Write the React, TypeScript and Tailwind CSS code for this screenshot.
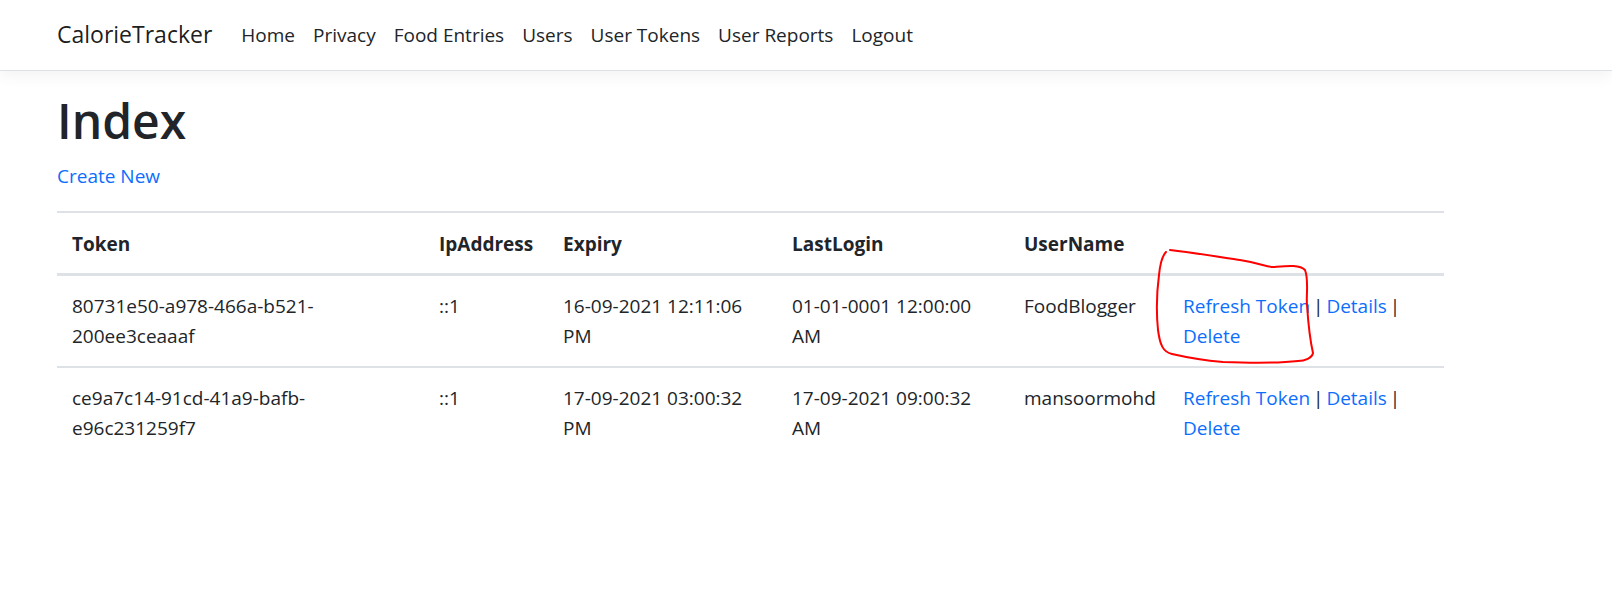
import React from 'react';

const navLinks = ['Home', 'Privacy', 'Food Entries', 'Users', 'User Tokens', 'User Reports', 'Logout'];

const rows = [
  {
    token: ['80731e50-a978-466a-b521-', '200ee3ceaaaf'],
    ip: '::1',
    expiry: ['16-09-2021 12:11:06', 'PM'],
    lastLogin: ['01-01-0001 12:00:00', 'AM'],
    user: 'FoodBlogger',
  },
  {
    token: ['ce9a7c14-91cd-41a9-bafb-', 'e96c231259f7'],
    ip: '::1',
    expiry: ['17-09-2021 03:00:32', 'PM'],
    lastLogin: ['17-09-2021 09:00:32', 'AM'],
    user: 'mansoormohd',
  },
];

const Lines = ({ parts }: { parts: string[] }) => (
  <>
    {parts.map((p, i) => (
      <React.Fragment key={i}>
        {i > 0 && <br />}
        {p}
      </React.Fragment>
    ))}
  </>
);

export default function App() {
  return (
    <div className="relative min-h-[612px] bg-white text-[#212529] font-['Open_Sans',sans-serif] text-[19px] leading-[30px]">
      {/* Navbar */}
      <header className="h-[71px] bg-white border-b border-[#dee2e6] shadow-[0_5px_15px_rgba(0,0,0,0.05)]">
        <div className="ml-[57px] w-[1387px] h-full flex items-center">
          <a className="text-[23px] leading-[37px] text-black/90 mr-[20px] pb-[1px]">CalorieTracker</a>
          <nav className="flex items-center">
            {navLinks.map((l) => (
              <a key={l} className="px-[9px] py-[10px] text-[#212529] leading-[30px]">
                {l}
              </a>
            ))}
          </nav>
        </div>
      </header>

      {/* Content */}
      <main className="ml-[57px] w-[1387px] pt-[20px]">
        <h1 className="text-[48px] leading-[60px] font-semibold mb-[10px]">Index</h1>
        <p className="mb-[20px]">
          <a className="text-[#0d6efd]">Create New</a>
        </p>

        <table className="w-[1387px] table-fixed border-collapse">
          <colgroup>
            <col className="w-[367px]" />
            <col className="w-[124px]" />
            <col className="w-[229px]" />
            <col className="w-[232px]" />
            <col className="w-[159px]" />
            <col className="w-[276px]" />
          </colgroup>
          <thead>
            <tr className="border-t-2 border-b-[3px] border-[#dee2e6]">
              {['Token', 'IpAddress', 'Expiry', 'LastLogin', 'UserName', ''].map((h, i) => (
                <th key={i} className="p-[15px] pt-[16px] pb-[14px] text-left font-bold align-bottom">
                  {h}
                </th>
              ))}
            </tr>
          </thead>
          <tbody>
            {rows.map((r, i) => (
              <tr key={i} className={i > 0 ? 'border-t-2 border-[#dee2e6]' : ''}>
                <td className="p-[15px] align-top">
                  <Lines parts={r.token} />
                </td>
                <td className="p-[15px] align-top">{r.ip}</td>
                <td className="p-[15px] align-top">
                  <Lines parts={r.expiry} />
                </td>
                <td className="p-[15px] align-top">
                  <Lines parts={r.lastLogin} />
                </td>
                <td className="p-[15px] align-top">{r.user}</td>
                <td className="p-[15px] align-top [word-spacing:-2px]">
                  <a className="text-[#0d6efd] [word-spacing:0]">Refresh Token</a> | <a className="text-[#0d6efd]">Details</a> |
                  <br />
                  <a className="text-[#0d6efd]">Delete</a>
                </td>
              </tr>
            ))}
          </tbody>
        </table>
      </main>

      {/* Hand-drawn red annotation */}
      <svg className="absolute left-0 top-0 pointer-events-none" width="1612" height="612" viewBox="0 0 1612 612">
        <path
          d="M1170 250 C1195 253 1220 257 1240 260 S1265 267 1273 267 C1285 266 1300 264 1305 270 C1309 280 1306 295 1307 305 C1308 320 1310 340 1313 353 C1312 358 1305 361 1298 361 C1280 363 1250 363 1223 362 C1200 360 1185 357 1172 354 C1163 352 1160 345 1158 330 C1156 310 1157 290 1159 275 C1160 265 1162 256 1166 252"
          fill="none"
          stroke="#ff0000"
          strokeWidth="2"
          strokeLinecap="round"
          strokeLinejoin="round"
        />
      </svg>
    </div>
  );
}
